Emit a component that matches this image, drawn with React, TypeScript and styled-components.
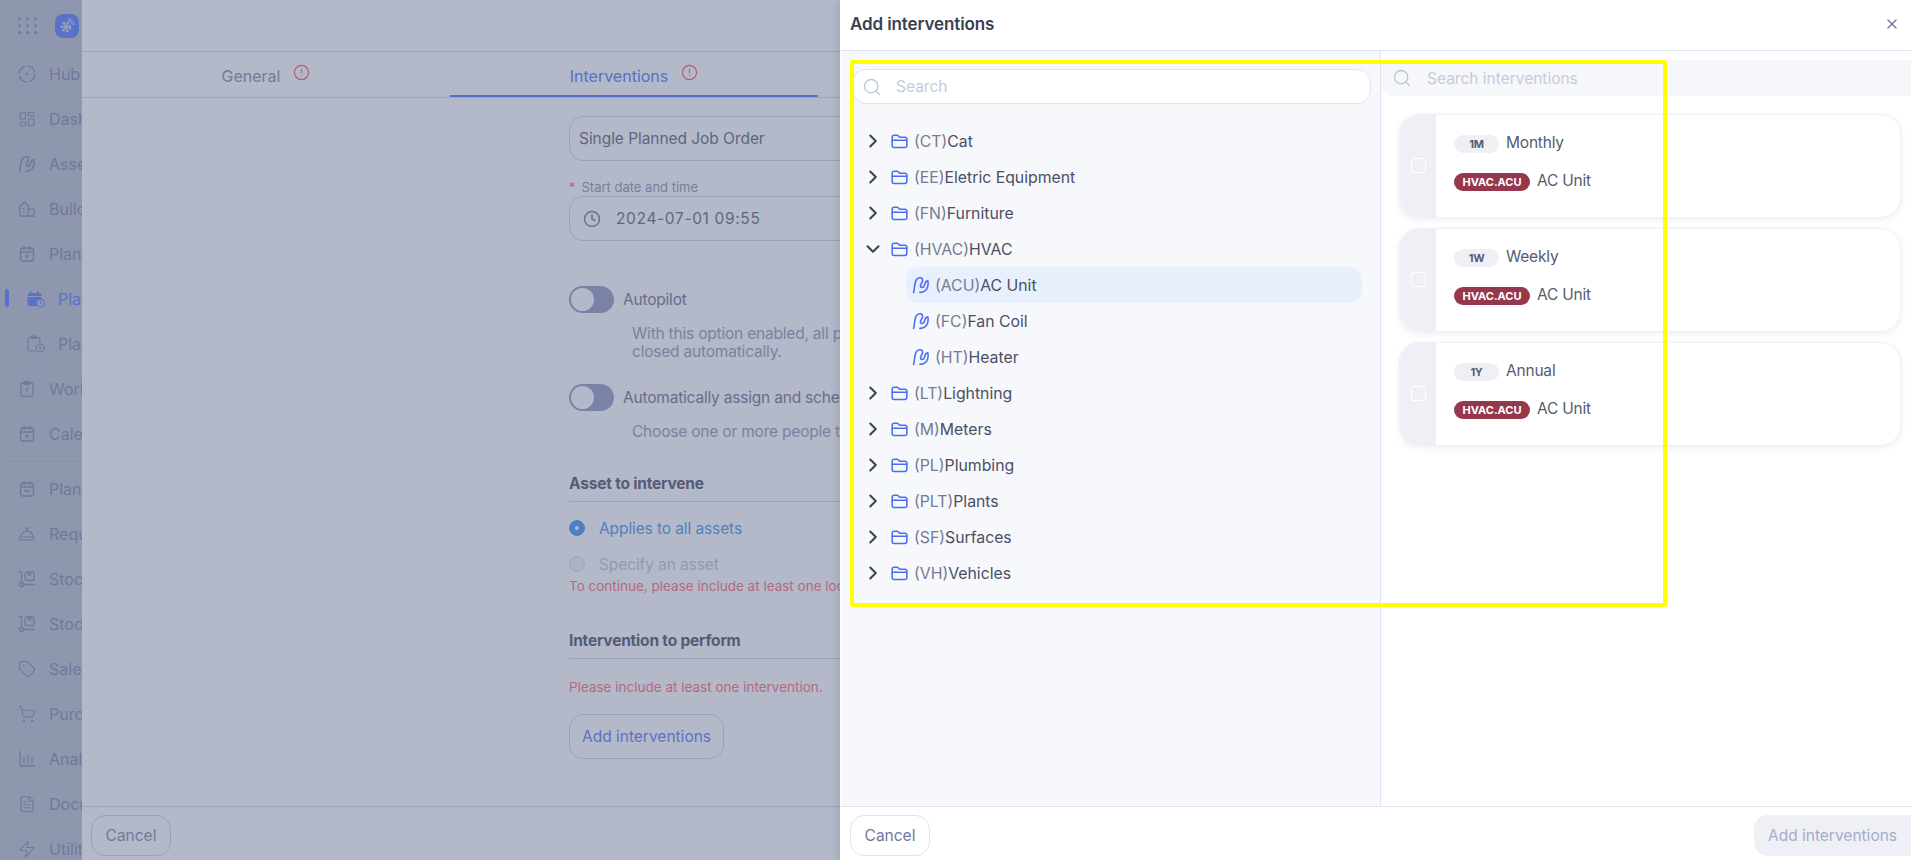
import * as React from 'react';
import styled, { createGlobalStyle } from 'styled-components';
import {
	ChevronDown,
	ChevronRight,
	CircleAlert,
	Clock,
	ConciergeBell,
	FileText,
	LayoutDashboard,
	Search,
	ShoppingCart,
	Tag,
	X,
	Zap,
} from 'lucide-react';

const GlobalStyle = createGlobalStyle`
	html, body {
		margin: 0;
		padding: 0;
		height: 100%;
		overflow: hidden;
		font-family: Inter, "Liberation Sans", sans-serif;
		background: #ffffff;
	}
	* { box-sizing: border-box; }
`;

const Screen = styled.div`
	position: relative;
	display: flex;
	width: 100vw;
	height: 100vh;
	overflow: hidden;
`;

/* ---- sidebar ---- */

const Sidebar = styled.aside`
	flex: 0 0 82px;
	background: #c6cbd7;
	overflow: hidden;
	color: #969ebc;
`;

const SidebarTop = styled.div`
	display: flex;
	align-items: center;
	height: 51px;
	padding-left: 18px;
	gap: 18px;
`;

const DotGrid = styled.div`
	display: grid;
	grid-template-columns: repeat(3, 3px);
	grid-auto-rows: 3px;
	gap: 4px 5px;
	span {
		border-radius: 50%;
		background: #969ebc;
	}
`;

const Logo = styled.div`
	display: flex;
	align-items: center;
	justify-content: center;
	width: 24px;
	height: 24px;
	border-radius: 8px;
	background: #7693ff;
	flex: none;
`;

const SideItem = styled.div<{ $indent?: boolean; $active?: boolean }>`
	position: relative;
	display: flex;
	align-items: center;
	height: 45px;
	gap: 13px;
	padding-left: ${(p) => (p.$indent ? '27px' : '18px')};
	font-size: 16px;
	white-space: nowrap;
	color: ${(p) => (p.$active ? '#7693ff' : '#969ebc')};
	svg {
		flex: none;
	}
`;

const ActiveMark = styled.span`
	position: absolute;
	left: 5px;
	top: 13px;
	width: 4px;
	height: 18px;
	border-radius: 2px;
	background: #7693ff;
`;

const SideDivider = styled.div`
	height: 1px;
	margin: 5px 0 4px 5px;
	background: #bcc1d0;
`;

/* ---- drawer behind the overlay ---- */

const Drawer = styled.main`
	flex: 1;
	display: flex;
	flex-direction: column;
	min-width: 0;
	background: #ffffff;
`;

const DrawerTop = styled.div`
	flex: 0 0 52px;
	border-bottom: 1px solid #dcdff0;
`;

const Tabs = styled.div`
	display: flex;
	flex: 0 0 45px;
	border-bottom: 1px solid #dcdff0;
`;

const Tab = styled.div<{ $active?: boolean }>`
	display: flex;
	align-items: center;
	justify-content: center;
	gap: 13px;
	width: 368px;
	height: 45px;
	padding-top: 4px;
	font-size: 16px;
	color: ${(p) => (p.$active ? '#6d8fff' : '#9a9fb8')};
	border-bottom: 2px solid ${(p) => (p.$active ? '#6d8fff' : 'transparent')};
	svg {
		margin-top: -6px;
	}
`;

const Form = styled.div`
	flex: 1;
	display: flex;
	flex-direction: column;
	padding: 18px 0 0 487px;
	width: 1200px;
`;

const Field = styled.div<{ $date?: boolean }>`
	display: flex;
	align-items: center;
	gap: 15px;
	width: 620px;
	height: 45px;
	padding: 0 ${(p) => (p.$date ? '13px' : '9px')};
	border: 1px solid #d9dcec;
	border-radius: 14px;
	font-size: 15.5px;
	letter-spacing: -0.05px;
	color: #7e8091;
`;

const DateValue = styled.span`
	letter-spacing: 0.65px;
`;

const FieldLabel = styled.div`
	display: flex;
	gap: 6px;
	margin: 18px 0 1px;
	font-size: 13px;
	line-height: 16px;
	color: #a3a6bc;
	b {
		font-weight: 400;
		color: #ff8691;
	}
`;

const ToggleRow = styled.div<{ $first?: boolean }>`
	display: flex;
	align-items: center;
	gap: 9px;
	margin-top: ${(p) => (p.$first ? '45px' : '23px')};
	font-size: 15.5px;
	letter-spacing: -0.2px;
	white-space: nowrap;
	color: #8a8ca0;
`;

const Toggle = styled.span`
	position: relative;
	display: block;
	flex: none;
	width: 45px;
	height: 27px;
	border-radius: 14px;
	background: #a8abca;
	&::after {
		content: '';
		position: absolute;
		left: 2px;
		top: 2px;
		width: 23px;
		height: 23px;
		border-radius: 50%;
		background: #ffffff;
	}
`;

const Hint = styled.div`
	margin: 12px 0 0 63px;
	font-size: 15.5px;
	line-height: 18px;
	letter-spacing: -0.2px;
	white-space: nowrap;
	color: #a8abc2;
`;

const SectionTitle = styled.div<{ $top: number }>`
	width: 620px;
	margin-top: ${(p) => p.$top}px;
	padding-bottom: 7px;
	border-bottom: 1px solid #d9dcec;
	font-size: 15.5px;
	line-height: 20px;
	font-weight: 700;
	letter-spacing: -0.2px;
	color: #70707e;
`;

const RadioRow = styled.div<{ $on?: boolean; $top: number }>`
	display: flex;
	align-items: center;
	gap: 14px;
	height: 20px;
	margin-top: ${(p) => p.$top}px;
	font-size: 15.5px;
	letter-spacing: -0.1px;
	color: ${(p) => (p.$on ? '#65a8f5' : '#ccd0dd')};
`;

const Radio = styled.span<{ $on?: boolean }>`
	display: flex;
	align-items: center;
	justify-content: center;
	width: 16px;
	height: 16px;
	border-radius: 50%;
	background: ${(p) => (p.$on ? '#65a8f5' : '#f4f5fa')};
	border: 1px solid ${(p) => (p.$on ? '#65a8f5' : '#dfe1ee')};
	&::after {
		content: '';
		width: 4px;
		height: 4px;
		border-radius: 50%;
		background: ${(p) => (p.$on ? '#ffffff' : 'transparent')};
	}
`;

const ErrorText = styled.div<{ $top: number }>`
	margin-top: ${(p) => p.$top}px;
	font-size: 13.5px;
	line-height: 16px;
	white-space: nowrap;
	color: #ff8691;
`;

const GhostButton = styled.button<{ $blue?: boolean }>`
	height: 45px;
	padding: 0 11px;
	border: 1px solid #d9dcec;
	border-radius: 14px;
	background: transparent;
	font-family: inherit;
	font-size: 15.5px;
	color: ${(p) => (p.$blue ? '#7693ff' : '#9a9fb8')};
`;

const AddButton = styled(GhostButton)`
	align-self: flex-start;
	width: 155px;
	margin-top: 19px;
`;

const DrawerFoot = styled.div`
	display: flex;
	align-items: center;
	flex: 0 0 54px;
	padding: 4px 9px 0;
	border-top: 1px solid #dcdff0;
`;

const FootCancel = styled(GhostButton)`
	width: 80px;
	height: 41px;
`;

/* ---- overlay + add interventions panel ---- */

const Overlay = styled.div`
	position: absolute;
	inset: 0;
	background: rgba(38, 55, 98, 0.35);
`;

const Panel = styled.section`
	position: absolute;
	top: 0;
	right: 0;
	bottom: 0;
	width: 1071px;
	display: flex;
	flex-direction: column;
	background: #ffffff;
	box-shadow: -3px 0 8px rgba(40, 50, 90, 0.12);
`;

const PanelHead = styled.header`
	display: flex;
	align-items: center;
	justify-content: space-between;
	flex: 0 0 51px;
	padding: 0 11px 2px 10px;
	border-bottom: 1px solid #e0e2f1;
	color: #7078a0;
`;

const PanelTitle = styled.h2`
	margin: 0;
	font-size: 17px;
	font-weight: 600;
	letter-spacing: -0.1px;
	color: #3b4052;
`;

const PanelBody = styled.div`
	flex: 1;
	display: grid;
	grid-template-columns: 541px 1fr;
	min-height: 0;
`;

const TreePane = styled.div`
	margin-left: 1px;
	padding: 18px 9px 0 11px;
	background: #f6f8fc;
	border-right: 1px solid #e0e2f1;
`;

const TreeSearch = styled.div`
	display: flex;
	align-items: center;
	gap: 14px;
	height: 35px;
	padding: 0 9px;
	border: 1px solid #dfe3f0;
	border-radius: 14px;
	background: #ffffff;
	font-size: 15.5px;
	color: #c5cbe0;
`;

const Tree = styled.div`
	margin: 19px 0 0 -11px;
`;

const TreeRow = styled.div`
	display: flex;
	align-items: center;
	height: 36px;
	padding-left: 21px;
	gap: 7px;
	font-size: 15.8px;
	color: #4a4f63;
	svg {
		flex: none;
	}
`;

const RowLabel = styled.span`
	margin-left: -1px;
`;

const ChildRow = styled.div<{ $selected?: boolean }>`
	display: flex;
	align-items: center;
	height: 36px;
	margin: 0 9px 0 65px;
	padding-left: 6px;
	gap: 5px;
	border-radius: 12px;
	font-size: 15.8px;
	color: #4a4f63;
	background: ${(p) => (p.$selected ? '#e8f0fd' : 'transparent')};
	svg {
		flex: none;
	}
`;

const Code = styled.span`
	color: #767b92;
`;

const ListPane = styled.div`
	padding-top: 9px;
`;

const ListSearch = styled.div`
	display: flex;
	align-items: center;
	gap: 15px;
	height: 36px;
	padding-left: 11px;
	border-radius: 0 0 0 12px;
	background: #f5f7fb;
	font-size: 15.5px;
	color: #c5cbe0;
`;

const Cards = styled.div`
	display: flex;
	flex-direction: column;
	gap: 10px;
	padding: 18px 10px 0 18px;
`;

const Card = styled.div`
	display: flex;
	height: 104px;
	border: 1px solid #eff0f7;
	border-radius: 20px;
	overflow: hidden;
	background: #ffffff;
	box-shadow: 0 2px 6px rgba(40, 50, 90, 0.08);
`;

const CardSide = styled.div`
	display: flex;
	align-items: center;
	justify-content: center;
	flex: 0 0 36px;
	padding-bottom: 2px;
	background: #eef0f6;
`;

const Check = styled.span`
	width: 15px;
	height: 15px;
	border: 1px solid #ffffff;
	border-radius: 2px;
`;

const CardMain = styled.div`
	display: flex;
	flex-direction: column;
	gap: 20px;
	padding: 20px 0 0 18px;
`;

const CardLine = styled.div`
	display: flex;
	align-items: center;
	gap: 7px;
	height: 18px;
	font-size: 15.5px;
	letter-spacing: -0.2px;
	color: #565b70;
`;

const CardText = styled.span`
	margin-top: -3px;
`;

const Pill = styled.span<{ $red?: boolean }>`
	display: flex;
	align-items: center;
	justify-content: center;
	width: ${(p) => (p.$red ? '76px' : '45px')};
	height: 18px;
	border-radius: 9px;
	font-size: 11px;
	font-weight: 700;
	letter-spacing: ${(p) => (p.$red ? '0' : '-0.3px')};
	background: ${(p) => (p.$red ? '#96384d' : '#eef0f6')};
	color: ${(p) => (p.$red ? '#ffffff' : '#555b73')};
`;

const PanelFoot = styled.footer`
	display: flex;
	align-items: center;
	justify-content: space-between;
	flex: 0 0 54px;
	padding: 4px 0 0 10px;
	border-top: 1px solid #e0e2f1;
`;

const PanelCancel = styled.button`
	width: 80px;
	height: 41px;
	border: 1px solid #e0e2f1;
	border-radius: 14px;
	background: #ffffff;
	font-family: inherit;
	font-size: 15.5px;
	color: #7078a0;
`;

const PanelAdd = styled.button`
	width: 157px;
	height: 41px;
	border: none;
	border-radius: 14px 0 0 14px;
	background: #eef0f6;
	font-family: inherit;
	font-size: 15.5px;
	color: #a6acc8;
`;

const Highlight = styled.div`
	position: absolute;
	left: 10px;
	top: 60px;
	width: 817px;
	height: 547px;
	border: 4px solid #ffff00;
	border-radius: 3px;
	pointer-events: none;
`;

/* ---- drawings ---- */

type IconProps = { size?: number; color?: string };

const AssetIcon = ({ size = 18, color = 'currentColor' }: IconProps) => (
	<svg width={size} height={size} viewBox="0 0 17 17" fill="none" stroke={color} strokeWidth="1.500" strokeLinecap="round" strokeLinejoin="round">
		<path d="M1.500 15.500C2.800 11.500 2 6.500 4.300 3.300 6.300.8 10 1.300 10 4c0 2-2 3.500-2 5.500 0 1.500 1.800 1.800 3 .5 1.200-1.300 1-3.500 2-4.500l2-1c.6 3.500-.3 7.500-2.800 9.500-1.700 1.300-3.200 1.500-4.700 1.500" />
	</svg>
);

const FolderIcon = () => (
	<svg width="17" height="17" viewBox="0 0 17 17" fill="none" stroke="#4a6cf7" strokeWidth="1.500" strokeLinecap="round" strokeLinejoin="round">
		<path d="M1.200 4.200c0-1.100.9-2 2-2h2.700c.6 0 1 .2 1.400.6l1.200 1.400h5.300c1.100 0 2 .9 2 2v6.400c0 1.100-.9 2-2 2H3.200c-1.100 0-2-.9-2-2V4.200z" />
		<path d="M1.200 7.200h14.600" />
	</svg>
);

const HubIcon = () => (
	<svg width="18" height="18" viewBox="0 0 18 18" fill="none" stroke="currentColor" strokeWidth="1.300">
		<circle cx="9" cy="9" r="7.800" strokeDasharray="10 2.300" />
		<circle cx="9" cy="9" r="0.700" fill="currentColor" />
	</svg>
);

const CalIcon = ({ mark }: { mark: 'dot' | 'line' }) => (
	<svg width="18" height="18" viewBox="0 0 18 18" fill="none" stroke="currentColor" strokeWidth="1.300" strokeLinecap="round">
		<rect x="2.500" y="3" width="13" height="13" rx="2.500" />
		<path d="M2.500 7h13M6 1.500v3M12 1.500v3" />
		{mark === 'dot' ? <circle cx="9" cy="11" r="1" /> : <path d="M6.500 11h5" />}
	</svg>
);

const BuildingIcon = () => (
	<svg width="18" height="18" viewBox="0 0 18 18" fill="none" stroke="currentColor" strokeWidth="1.300" strokeLinejoin="round">
		<path d="M2 16V6l4.500-4L10 5.500V16zM10 9h4.500a1.500 1.500 0 0 1 1.500 1.500V16h-6M2 16h8M4.800 9h2M4.800 12h2" />
	</svg>
);

const CalendarClockFill = () => (
	<svg width="18" height="18" viewBox="0 0 18 18" fill="#7693ff">
		<rect x="0.500" y="3" width="14" height="13" rx="2.500" />
		<rect x="3" y="1" width="1.500" height="3" />
		<rect x="10" y="1" width="1.500" height="3" />
		<path d="M.5 6.500h14" stroke="#c6cbd7" />
		<circle cx="13.500" cy="13" r="4" fill="#c6cbd7" stroke="#7693ff" />
		<path d="M13.500 11v2l1.200.8" fill="none" stroke="#7693ff" />
	</svg>
);

const ClipClock = () => (
	<svg width="18" height="18" viewBox="0 0 18 18" fill="none" stroke="currentColor" strokeWidth="1.200" strokeLinecap="round">
		<path d="M8 16H3a2 2 0 0 1-2-2V4.500a2 2 0 0 1 2-2h8a2 2 0 0 1 2 2v3" />
		<rect x="4.500" y="1" width="5" height="2.500" rx="1" />
		<circle cx="13" cy="13" r="4" />
		<path d="M13 11v2l1.200.8" />
	</svg>
);

const ClipAlert = () => (
	<svg width="18" height="18" viewBox="0 0 18 18" fill="none" stroke="currentColor" strokeWidth="1.300" strokeLinecap="round">
		<rect x="3" y="3" width="12" height="13.500" rx="1.500" />
		<rect x="6.500" y="1.500" width="5" height="3" rx="1" />
		<path d="M9 7.500v4M9 13.800v.1" />
	</svg>
);

const TrolleyIcon = () => (
	<svg width="18" height="18" viewBox="0 0 18 18" fill="none" stroke="currentColor" strokeWidth="1.300" strokeLinecap="round" strokeLinejoin="round">
		<path d="M1 1.500h1.500a1 1 0 0 1 1 1V12M6 14.500h10.500" />
		<circle cx="3.500" cy="14.500" r="2" />
		<rect x="7" y="2" width="9" height="8.500" rx="2" />
		<path d="M10.500 2v3h2V2" />
	</svg>
);

const BarsIcon = () => (
	<svg width="18" height="18" viewBox="0 0 18 18" fill="none" stroke="currentColor" strokeWidth="1.300" strokeLinecap="round">
		<path d="M2 1.500V16h14.500M6 8v5M10 5.500V13M14 8v5" />
	</svg>
);

const LogoGear = () => (
	<svg width="16" height="16" viewBox="0 0 16 16" fill="none" stroke="#d5dcf5">
		<circle cx="7" cy="9" r="3.800" strokeWidth="3" strokeDasharray="2.200 1.400" />
		<circle cx="7" cy="9" r="2" fill="#d5dcf5" stroke="none" />
		<path d="M9 2.500a5 5 0 0 1 4.500 4.500M9 .8a7 7 0 0 1 6.200 6.200" strokeWidth="1" />
	</svg>
);

/* ---- data ---- */

const groupsBefore = [
	['(CT)', 'Cat'],
	['(EE)', 'Eletric Equipment'],
	['(FN)', 'Furniture'],
];
const children = [
	['(ACU)', 'AC Unit'],
	['(FC)', 'Fan Coil'],
	['(HT)', 'Heater'],
];
const groupsAfter = [
	['(LT)', 'Lightning'],
	['(M)', 'Meters'],
	['(PL)', 'Plumbing'],
	['(PLT)', 'Plants'],
	['(SF)', 'Surfaces'],
	['(VH)', 'Vehicles'],
];
const interventions = [
	['1M', 'Monthly'],
	['1W', 'Weekly'],
	['1Y', 'Annual'],
];

const Group = ({ code, name, open }: { code: string; name: string; open?: boolean }) => (
	<TreeRow>
		{open ? <ChevronDown size={22} color="#3f4354" strokeWidth={2.300} /> : <ChevronRight size={22} color="#3f4354" strokeWidth={2.300} />}
		<FolderIcon />
		<RowLabel>
			<Code>{code}</Code>
			{name}
		</RowLabel>
	</TreeRow>
);

const App = () => (
	<Screen>
		<GlobalStyle />
		<Sidebar>
			<SidebarTop>
				<DotGrid>
					{Array.from({ length: 9 }).map((_, i) => (
						<span key={i} />
					))}
				</DotGrid>
				<Logo>
					<LogoGear />
				</Logo>
			</SidebarTop>
			<SideItem><HubIcon />Hub</SideItem>
			<SideItem><LayoutDashboard size={18} strokeWidth={1.500} />Dashboards</SideItem>
			<SideItem><AssetIcon />Assets</SideItem>
			<SideItem><BuildingIcon />Buildings</SideItem>
			<SideItem><CalIcon mark="dot" />Planning</SideItem>
			<SideItem $indent $active><ActiveMark /><CalendarClockFill />Planned</SideItem>
			<SideItem $indent><ClipClock />Planned</SideItem>
			<SideItem><ClipAlert />Work</SideItem>
			<SideItem><CalIcon mark="dot" />Calendar</SideItem>
			<SideDivider />
			<SideItem><CalIcon mark="line" />Plans</SideItem>
			<SideItem><ConciergeBell size={18} strokeWidth={1.500} />Requests</SideItem>
			<SideItem><TrolleyIcon />Stock</SideItem>
			<SideItem><TrolleyIcon />Stock</SideItem>
			<SideItem><Tag size={18} strokeWidth={1.500} />Sales</SideItem>
			<SideItem><ShoppingCart size={18} strokeWidth={1.500} />Purchases</SideItem>
			<SideItem><BarsIcon />Analytics</SideItem>
			<SideItem><FileText size={18} strokeWidth={1.500} />Documents</SideItem>
			<SideItem><Zap size={18} strokeWidth={1.500} />Utilities</SideItem>
		</Sidebar>

		<Drawer>
			<DrawerTop />
			<Tabs>
				<Tab>General <CircleAlert size={17} color="#ff6f7f" strokeWidth={1.700} /></Tab>
				<Tab $active>Interventions <CircleAlert size={17} color="#ff6f7f" strokeWidth={1.700} /></Tab>
			</Tabs>
			<Form>
				<Field>Single Planned Job Order</Field>
				<FieldLabel><b>*</b>Start date and time</FieldLabel>
				<Field $date><Clock size={18} color="#8f92a8" /><DateValue>2024-07-01 09:55</DateValue></Field>
				<ToggleRow $first><Toggle />Autopilot</ToggleRow>
				<Hint>
					With this option enabled, all planned job orders will be
					<br />
					closed automatically.
				</Hint>
				<ToggleRow><Toggle />Automatically assign and schedule job orders</ToggleRow>
				<Hint>Choose one or more people to assign job orders to.</Hint>
				<SectionTitle $top={33}>Asset to intervene</SectionTitle>
				<RadioRow $on $top={16}><Radio $on />Applies to all assets</RadioRow>
				<RadioRow $top={16}><Radio />Specify an asset</RadioRow>
				<ErrorText $top={4}>To continue, please include at least one location.</ErrorText>
				<SectionTitle $top={37}>Intervention to perform</SectionTitle>
				<ErrorText $top={20}>Please include at least one intervention.</ErrorText>
				<AddButton $blue>Add interventions</AddButton>
			</Form>
			<DrawerFoot>
				<FootCancel>Cancel</FootCancel>
			</DrawerFoot>
		</Drawer>

		<Overlay />

		<Panel>
			<PanelHead>
				<PanelTitle>Add interventions</PanelTitle>
				<X size={16} />
			</PanelHead>
			<PanelBody>
				<TreePane>
					<TreeSearch>
						<Search size={20} color="#bcc3d9" strokeWidth={1.600} />
						Search
					</TreeSearch>
					<Tree>
						{groupsBefore.map(([code, name]) => (
							<Group key={code} code={code} name={name} />
						))}
						<Group code="(HVAC)" name="HVAC" open />
						{children.map(([code, name], i) => (
							<ChildRow key={code} $selected={i === 0}>
								<AssetIcon size={18} color="#4a6cf7" />
								<span>
									<Code>{code}</Code>
									{name}
								</span>
							</ChildRow>
						))}
						{groupsAfter.map(([code, name]) => (
							<Group key={code} code={code} name={name} />
						))}
					</Tree>
				</TreePane>
				<ListPane>
					<ListSearch>
						<Search size={20} color="#bcc3d9" strokeWidth={1.600} />
						Search interventions
					</ListSearch>
					<Cards>
						{interventions.map(([code, name]) => (
							<Card key={code}>
								<CardSide><Check /></CardSide>
								<CardMain>
									<CardLine><Pill>{code}</Pill><CardText>{name}</CardText></CardLine>
									<CardLine><Pill $red>HVAC.ACU</Pill><CardText>AC Unit</CardText></CardLine>
								</CardMain>
							</Card>
						))}
					</Cards>
				</ListPane>
			</PanelBody>
			<PanelFoot>
				<PanelCancel>Cancel</PanelCancel>
				<PanelAdd>Add interventions</PanelAdd>
			</PanelFoot>
			<Highlight />
		</Panel>
	</Screen>
);

export default App;
